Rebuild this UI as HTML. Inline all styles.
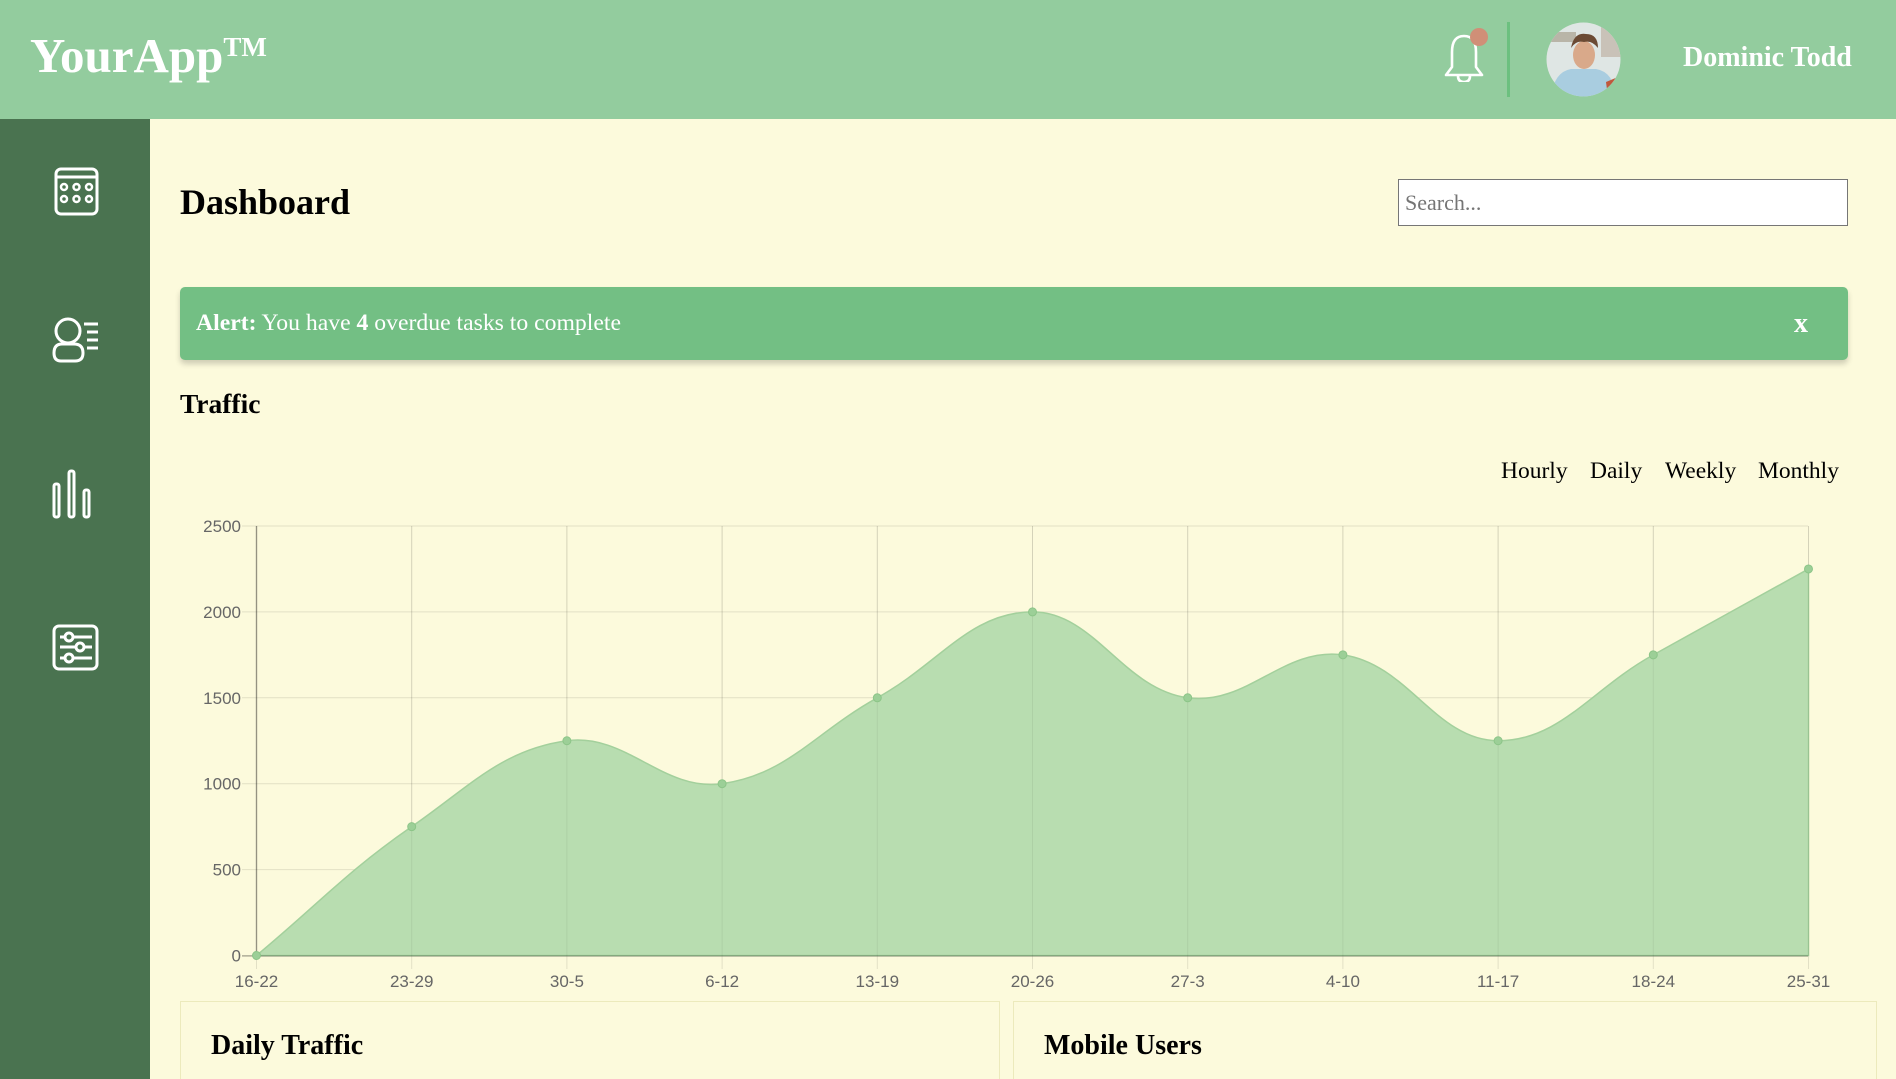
<!DOCTYPE html>
<html><head><meta charset="utf-8">
<style>
html,body{margin:0;padding:0;}
body{width:1896px;height:1079px;overflow:hidden;background:#fcfadc;font-family:"Liberation Serif",serif;position:relative;}
.header{position:absolute;left:0;top:0;width:1896px;height:119px;background:#93cc9e;}
.logo{position:absolute;left:30px;top:28px;color:#fff;font-weight:bold;font-size:49px;line-height:56px;}
.logo sup{font-size:27px;vertical-align:0;position:relative;top:-16px;}
.name{position:absolute;left:1683px;top:42px;color:#fff;font-weight:bold;font-size:28px;line-height:32px;}
.divider{position:absolute;left:1507px;top:22px;width:3px;height:75px;background:#6cc07f;}
.side{position:absolute;left:0;top:119px;width:150px;height:960px;background:#4a7350;}
h1{position:absolute;left:180px;top:180px;margin:0;font-size:36px;line-height:44px;font-weight:bold;}
.search{position:absolute;left:1398px;top:179px;width:450px;height:47px;border:1px solid #767676;background:#fff;box-sizing:border-box;font-size:22px;color:#757575;padding:10px 6px;line-height:26px;}
.alert{position:absolute;left:180px;top:287px;width:1668px;height:73px;background:#73bf84;border-radius:5px;box-shadow:0 4px 6px rgba(0,0,0,0.18);color:#fff;font-size:23.7px;}
.alert .t{position:absolute;left:16px;top:23px;line-height:26px;}
.alert .x{position:absolute;left:1614px;top:23px;font-weight:bold;font-size:28px;line-height:28px;}
.traffic{position:absolute;left:180px;top:388px;font-size:27.5px;font-weight:bold;line-height:32px;}
.tabs{position:absolute;top:457px;font-size:23.5px;line-height:28px;}
.card{position:absolute;top:1001px;height:78px;border:1px solid #eceabc;border-bottom:none;box-sizing:border-box;}
.card div{position:absolute;left:30px;top:28px;font-size:28px;font-weight:bold;line-height:32px;}
svg text{font-family:"Liberation Sans",sans-serif;}
</style></head><body>
<div class="header">
 <div class="logo">YourApp<sup>TM</sup></div>
 <svg style="position:absolute;left:1436px;top:26px" width="60" height="56" viewBox="0 0 60 56">
  <path d="M10 49 L16 41 L16 26 Q16 10 28 10 Q40 10 40 26 L40 41 L46 49 Z" fill="none" stroke="#fff" stroke-width="2.6" stroke-linejoin="round"/>
  <path d="M22 50 Q22 56 28 56 Q34 56 34 50" fill="none" stroke="#fff" stroke-width="2.6"/>
  <circle cx="43" cy="11" r="9" fill="#d08f77"/>
 </svg>
 <div class="divider"></div>
 <svg style="position:absolute;left:1546px;top:22px" width="75" height="75" viewBox="0 0 75 75">
  <defs><clipPath id="c"><circle cx="37.5" cy="37.5" r="37"/></clipPath></defs>
  <g clip-path="url(#c)">
   <rect width="75" height="75" fill="#dfe6e4"/>
   <rect x="0" y="10" width="30" height="10" fill="#b9b5a8"/>
   <rect x="55" y="5" width="20" height="30" fill="#c9c2b8"/>
   <path d="M5 75 Q8 50 25 47 L50 47 Q68 50 70 75 Z" fill="#a9cde0"/>
   <path d="M60 60 L72 55 L75 75 L62 75Z" fill="#c0583c"/>
   <ellipse cx="38" cy="33" rx="11" ry="14" fill="#d9a98a"/>
   <path d="M25 26 Q28 10 40 12 Q52 12 52 26 Q46 18 38 20 Q30 18 25 26Z" fill="#6b4a34"/>
  </g>
 </svg>
 <div class="name">Dominic Todd</div>
</div>
<div class="side">
 <svg style="position:absolute;left:0;top:0" width="150" height="600" viewBox="0 0 150 600" fill="none" stroke="#fff" stroke-width="3">
  <rect x="56" y="50" width="41" height="45" rx="5"/>
  <line x1="56" y1="58" x2="97" y2="58"/>
  <g stroke-width="2.5"><circle cx="64" cy="68" r="3"/><circle cx="76.5" cy="68" r="3"/><circle cx="89" cy="68" r="3"/><circle cx="64" cy="80" r="3"/><circle cx="76.5" cy="80" r="3"/><circle cx="89" cy="80" r="3"/></g>
  <circle cx="68" cy="212" r="12"/>
  <path d="M62 225 L74 225 Q83 225 83 234 Q83 242 75 242 L61 242 Q54 242 54 234 Q54 225 62 225Z"/>
  <line x1="84" y1="205" x2="98" y2="205"/><line x1="87" y1="213" x2="98" y2="213"/><line x1="87" y1="221" x2="98" y2="221"/><line x1="87" y1="229" x2="98" y2="229"/>
  <rect x="54" y="365" width="5" height="33" rx="2"/>
  <rect x="69" y="352" width="5" height="46" rx="2"/>
  <rect x="84" y="371" width="5" height="27" rx="2"/>
  <rect x="54" y="507" width="43" height="43" rx="5"/>
  <line x1="60" y1="518" x2="92" y2="518"/><line x1="60" y1="528" x2="92" y2="528"/><line x1="60" y1="539" x2="92" y2="539"/>
  <circle cx="69" cy="518" r="4" fill="#4a7350"/><circle cx="80" cy="528" r="4" fill="#4a7350"/><circle cx="69" cy="539" r="4" fill="#4a7350"/>
 </svg>
</div>
<h1>Dashboard</h1>
<div class="search">Search...</div>
<div class="alert"><div class="t"><b>Alert:</b> You have <b>4</b> overdue tasks to complete</div><div class="x">x</div></div>
<div class="traffic">Traffic</div>
<div class="tabs" style="left:1501px">Hourly</div>
<div class="tabs" style="left:1590px">Daily</div>
<div class="tabs" style="left:1665px">Weekly</div>
<div class="tabs" style="left:1758px">Monthly</div>
<svg id="ch" style="position:absolute;left:0;top:0" width="1896" height="1079"></svg>
<div class="card" style="left:180px;width:820px"><div>Daily Traffic</div></div>
<div class="card" style="left:1013px;width:864px"><div>Mobile Users</div></div>
<script>
var v=[0,750,1250,1000,1500,2000,1500,1750,1250,1750,2250];
var lb=["16-22","23-29","30-5","6-12","13-19","20-26","27-3","4-10","11-17","18-24","25-31"];
var x0=256.5,dx=155.2,y0=955.5,h=429.5;
var P=v.map(function(a,i){return [x0+i*dx,y0-a/2500*h];});
var s='';
for(var k=0;k<=5;k++){var y=y0-k*h/5;s+='<line x1="242" x2="1808" y1="'+y+'" y2="'+y+'" stroke="rgba(0,0,0,0.1)"/>';
 s+='<text x="241" y="'+(y+6)+'" text-anchor="end" font-size="17" fill="#666">'+(k*500)+'</text>';}
for(var i=0;i<11;i++){var x=P[i][0];s+='<line x1="'+x+'" x2="'+x+'" y1="526" y2="969" stroke="rgba(0,0,0,0.1)"/>';
 s+='<text x="'+x+'" y="987" text-anchor="middle" font-size="17" fill="#666">'+lb[i]+'</text>';}
var t=0.4,cp=[];
for(var i=0;i<11;i++){var p=P[i],a=P[i-1]||p,b=P[i+1]||p;
 var d1=Math.hypot(p[0]-a[0],p[1]-a[1]),d2=Math.hypot(b[0]-p[0],b[1]-p[1]);
 var fa=d1+d2?t*d1/(d1+d2):0,fb=d1+d2?t*d2/(d1+d2):0;
 cp.push([[p[0]-fa*(b[0]-a[0]),p[1]-fa*(b[1]-a[1])],[p[0]+fb*(b[0]-a[0]),p[1]+fb*(b[1]-a[1])]]);}
for(var i=0;i<11;i++){cp[i][0][1]=Math.min(cp[i][0][1],y0);cp[i][1][1]=Math.min(cp[i][1][1],y0);}
var d='M'+P[0][0]+' '+P[0][1];
for(var i=1;i<11;i++){d+=' C'+cp[i-1][1][0]+' '+cp[i-1][1][1]+' '+cp[i][0][0]+' '+cp[i][0][1]+' '+P[i][0]+' '+P[i][1];}
s+='<path d="'+d+' L'+P[10][0]+' '+y0+' L'+P[0][0]+' '+y0+'Z" fill="#b8ddb0" stroke="#a3d09c" stroke-width="1.5"/>';
for(var i=0;i<11;i++){var x=P[i][0];s+='<line x1="'+x+'" x2="'+x+'" y1="526" y2="956" stroke="rgba(0,0,0,0.06)"/>';}
s+='<line x1="256.5" x2="256.5" y1="526" y2="956" stroke="rgba(0,0,0,0.3)" stroke-width="1.5"/>';
s+='<line x1="242" x2="1808" y1="956" y2="956" stroke="rgba(0,0,0,0.25)" stroke-width="1.5"/>';
for(var i=0;i<11;i++)s+='<circle cx="'+P[i][0]+'" cy="'+P[i][1]+'" r="4" fill="#9ccf97" stroke="#8cc588"/>';
document.getElementById('ch').innerHTML=s;
</script>
</body></html>
